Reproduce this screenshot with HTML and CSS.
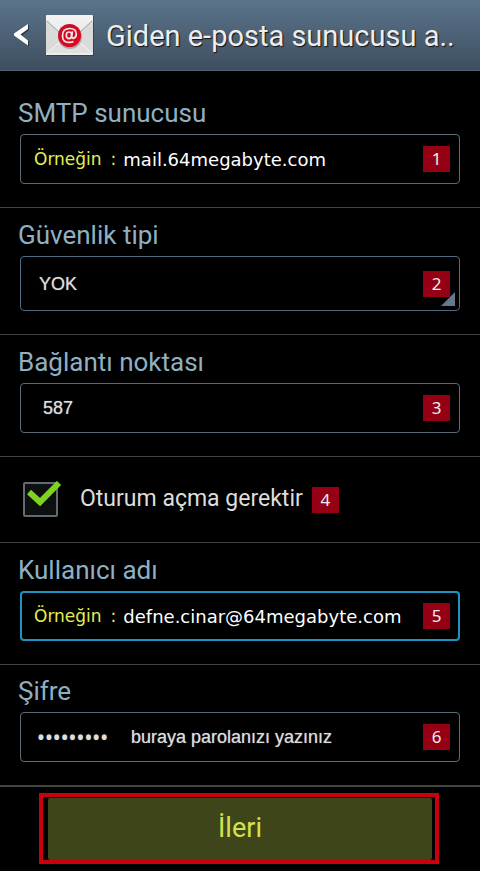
FILE: index.html
```html
<!DOCTYPE html>
<html lang="tr">
<head>
<meta charset="utf-8">
<meta name="viewport" content="width=device-width, initial-scale=1">
<title>Giden e-posta sunucusu</title>
<link rel="stylesheet" href="styles.css">
</head>
<body>
<header class="bar">
  <button class="back" type="button" aria-label="Geri">
    <svg width="16" height="24" viewBox="0 0 16 24"><path class="back-shadow" d="M15 2v5L8 12.500l7 6v5L2 13z"/><path d="M14 1v5L6.500 11.500 14 17.500v5L0 12.500v-2z" fill="#fff"/></svg>
  </button>
  <svg class="mail" width="48" height="42" viewBox="0 0 48 42" aria-hidden="true">
    <defs>
      <linearGradient id="paper" x1="0" y1="0" x2="0" y2="1"><stop offset="0" stop-color="#f4f4f4"/><stop offset="1" stop-color="#dcdcdc"/></linearGradient>
      <linearGradient id="seal" x1="0" y1="0" x2="1" y2="1"><stop offset="0" stop-color="#c4122a"/><stop offset="1" stop-color="#e8001c"/></linearGradient>
    </defs>
    <rect x="1" y="2" width="47" height="40" rx="1" fill="#27333f" opacity=".6"/>
    <rect x="0" y="1" width="47" height="40" rx="1" fill="url(#paper)"/>
    <path d="M0 7v32L18 24zM47 7v32L29 24z" fill="#dadada"/>
    <path d="M1 40l17-16h11l17 16z" fill="#e0e0e0"/>
    <path d="M1 39l17-15M46 39L29 24" stroke="#f4f4f4" fill="none"/>
    <path d="M1 7l15 14M46 7L31 21" stroke="#999" fill="none"/>
    <path d="M0 40h47" stroke="#fafafa"/>
    <circle cx="24" cy="23" r="12" fill="#777" opacity=".5"/>
    <circle cx="23.500" cy="21.500" r="11.500" fill="url(#seal)"/>
    <g fill="none" stroke="#f5e6e6" stroke-width="1.700"><ellipse cx="23" cy="21.300" rx="2.700" ry="3.300"/><path d="M26.500 17.300l-1 5q0 2 2 2 2.800-.6 2.800-4 0-5.800-6.600-5.800-7.200 0-7.200 7.200t7 6.600q2.400 0 4-.8"/></g>
  </svg>
  <h1 class="title">Giden e-posta sunucusu a..</h1>
</header>

<form class="form">
  <section class="group first">
    <label class="label" for="smtp">SMTP sunucusu</label>
    <div class="field">
      <span class="hint"><span>Örneğin</span> <span>:</span></span>
      <input class="input example" id="smtp" type="text" value="mail.64megabyte.com">
      <span class="badge">1</span>
    </div>
  </section>

  <section class="group">
    <label class="label" for="security">Güvenlik tipi</label>
    <div class="field drop">
      <select class="input" id="security"><option>YOK</option></select>
      <span class="badge">2</span>
      <span class="corner"></span>
    </div>
  </section>

  <section class="group">
    <label class="label" for="port">Bağlantı noktası</label>
    <div class="field port">
      <input class="input" id="port" type="text" value="587">
      <span class="badge">3</span>
    </div>
  </section>

  <section class="check-row">
    <span class="check">
      <input class="box" id="auth" type="checkbox" checked>
      <svg class="tick" width="36" height="26" viewBox="0 0 36 26" aria-hidden="true"><path d="M2 11l11 10L32 2" stroke="#7ed321" stroke-width="6" fill="none"/></svg>
    </span>
    <label class="check-label" for="auth">Oturum açma gerektir</label>
    <span class="badge">4</span>
  </section>

  <section class="group">
    <label class="label" for="user">Kullanıcı adı</label>
    <div class="field active">
      <span class="hint"><span>Örneğin</span> <span>:</span></span>
      <input class="input example" id="user" type="text" value="defne.cinar@64megabyte.com">
      <span class="badge">5</span>
    </div>
  </section>

  <section class="group last">
    <label class="label" for="password">Şifre</label>
    <div class="field secret">
      <input class="input dots" id="password" type="password" value="parola123">
      <span class="note">buraya parolanızı yazınız</span>
      <span class="badge">6</span>
    </div>
  </section>

  <footer class="footer">
    <div class="frame"><button class="next" type="button">İleri</button></div>
  </footer>
</form>
</body>
</html>
```
FILE: styles.css
```css
* {
  box-sizing: border-box;
}

body {
  margin: 0;
  background: #000;
  color: #ddd;
  font-family: Roboto, sans-serif;
}

.bar {
  display: flex;
  align-items: center;
  height: 71px;
  padding: 0 14px;
  border-bottom: 1px solid #4d6275;
  background: linear-gradient(#5a748b, #3f4e60);
}

.back {
  display: flex;
  margin-right: 16px;
  padding: 0;
  border: 0;
  background: none;
}

.back-shadow {
  fill: #27333f;
}

.mail {
  flex: none;
  margin-right: 12px;
}

.title {
  flex: 1;
  margin: 2px 0 0;
  overflow: hidden;
  color: #eee;
  font-size: 29px;
  font-weight: 400;
  line-height: 40px;
  text-shadow: 1px 1px 1px #111;
  white-space: nowrap;
}

.group {
  padding: 7px 20px 23px;
  border-bottom: 1px solid #444;
}

.first {
  padding-top: 22px;
}

.last {
  padding-top: 6px;
  border-bottom: 0;
}

.label {
  display: block;
  margin: 0 0 1px -2px;
  color: #8fb0c2;
  font-size: 26px;
  font-weight: 400;
  line-height: 40px;
}

.field {
  position: relative;
  display: flex;
  align-items: center;
  height: 50px;
  padding: 0 9px 0 13px;
  border: 1px solid #5b6b76;
  border-radius: 4px;
}

.drop {
  height: 55px;
  padding-left: 18px;
  border-color: #4f6a80;
}

.port {
  padding-left: 22px;
}

.secret {
  padding-left: 16px;
}

.active {
  padding: 0 8px 0 12px;
  border: 2px solid #1f93c2;
}

.hint {
  display: flex;
  gap: 9px;
  margin-right: 7px;
  color: #e1f050;
  font-family: "DejaVu Sans", sans-serif;
  font-size: 17px;
  line-height: 24px;
  white-space: nowrap;
}

.input {
  flex: 1;
  min-width: 0;
  height: 40px;
  margin: 0;
  padding: 0;
  border: 0;
  outline: 0;
  appearance: none;
  background: none;
  color: #ddd;
  font-family: "Liberation Sans", sans-serif;
  font-size: 18px;
  text-shadow: 0 0 1px #999;
}

.example {
  color: #fff;
  font-family: "DejaVu Sans", sans-serif;
  text-shadow: none;
}

.dots {
  flex: none;
  width: 80px;
  font-family: "Noto Sans", sans-serif;
  font-size: 21px;
}

.note {
  flex: 1;
  margin-left: 14px;
  font-family: "Liberation Sans", sans-serif;
  font-size: 18px;
  text-shadow: 0 0 1px #999;
  white-space: nowrap;
}

.badge {
  flex: none;
  width: 27px;
  height: 26px;
  background: #950015;
  color: #eee;
  font-family: "Noto Sans", sans-serif;
  font-size: 17px;
  line-height: 26px;
  text-align: center;
}

.corner {
  position: absolute;
  right: 4px;
  bottom: 4px;
  width: 14px;
  height: 14px;
  background: #65788c;
  clip-path: polygon(100% 0, 100% 100%, 0 100%);
}

.check-row {
  display: flex;
  align-items: center;
  height: 86px;
  padding: 0 23px;
  border-bottom: 1px solid #444;
}

.check {
  position: relative;
  display: flex;
  margin-right: 22px;
}

.box {
  width: 35px;
  height: 35px;
  margin: 0;
  border: 2px solid #626a72;
  border-radius: 2px;
  appearance: none;
  background: #0d1011;
}

.tick {
  position: absolute;
  top: -1px;
  left: 4px;
  pointer-events: none;
}

.check-label {
  margin: 0 9px 2px 0;
  font-size: 23px;
  line-height: 32px;
}

.footer {
  padding: 6px 41px 7px 39px;
  border-top: 2px solid #444;
}

.frame {
  padding: 1px 3px 0 5px;
  border: 4px solid #cc000c;
}

.next {
  display: block;
  width: 100%;
  height: 62px;
  padding: 0 0 2px;
  border: 0;
  border-radius: 2px;
  background: #3f451a;
  color: #d3e34a;
  font-family: Roboto, sans-serif;
  font-size: 27px;
}
```
